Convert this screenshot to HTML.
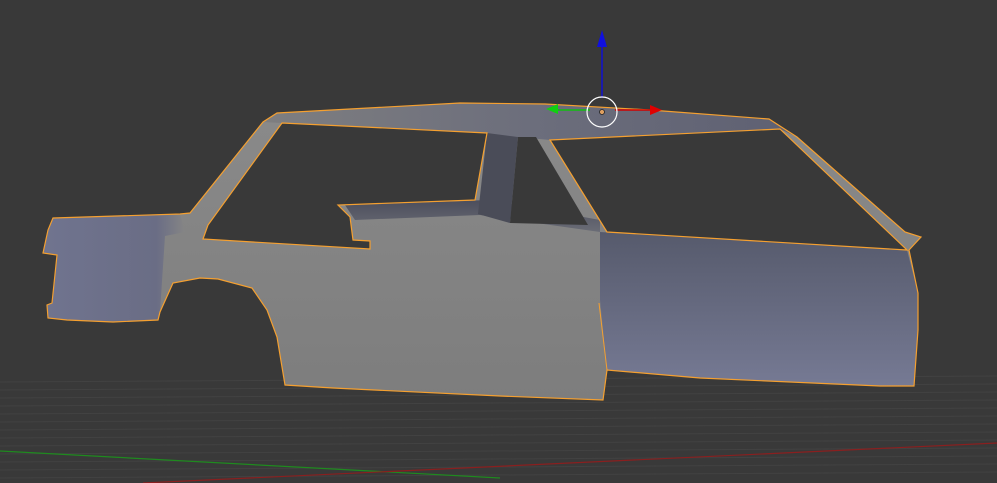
<!DOCTYPE html>
<html><head><meta charset="utf-8"><style>
html,body{margin:0;padding:0;background:#393939;overflow:hidden}
svg{display:block}
</style></head><body>
<svg width="997" height="483" viewBox="0 0 997 483" xmlns="http://www.w3.org/2000/svg">
<defs>
<linearGradient id="door" x1="0" y1="0" x2="0" y2="1">
<stop offset="0" stop-color="#8a8a8a"/><stop offset="1" stop-color="#7d7d7d"/></linearGradient>
<linearGradient id="rear" x1="0" y1="0" x2="0" y2="1">
<stop offset="0" stop-color="#565a6c"/><stop offset="1" stop-color="#767a94"/></linearGradient>
<linearGradient id="roof" x1="0" y1="0" x2="1" y2="0">
<stop offset="0" stop-color="#7e7e80"/><stop offset="0.5" stop-color="#6c6e7c"/><stop offset="1" stop-color="#5e6072"/></linearGradient>
<linearGradient id="fend" x1="0" y1="0" x2="1" y2="0">
<stop offset="0" stop-color="#70748f"/><stop offset="0.8" stop-color="#6a6d85"/><stop offset="1" stop-color="#858585"/></linearGradient>
<linearGradient id="seat" x1="0" y1="0" x2="0" y2="1">
<stop offset="0" stop-color="#4c4e5c"/><stop offset="1" stop-color="#6a6c76"/></linearGradient>
</defs>
<g stroke="#424242" stroke-width="1" fill="none">
<path d="M0 382 L997 376"/><path d="M0 390 L997 384"/><path d="M0 398 L997 392"/><path d="M0 406 L997 400"/>
<path d="M0 414 L997 408"/><path d="M0 422 L997 416"/><path d="M0 430 L997 424"/><path d="M0 438 L997 432"/>
<path d="M0 446 L997 440"/><path d="M0 454 L997 448"/><path d="M0 462 L997 456"/><path d="M0 470 L997 464"/><path d="M0 478 L997 472"/>
</g>
<path d="M0 451 L500 478" stroke="#1f8a1f" stroke-width="1.2"/>
<path d="M143 483 L997 443" stroke="#8a1f1f" stroke-width="1.2"/>
<!-- body -->
<path d="M53 218 L180 214 L190 213 L263 122 L277 113 L460 103 L545 104 L650 110 L769 119 L797 137 L905 232 L921 237 L909 250 L918 293 L918 330 L914 386 L880 386 L700 378 L607 370 L603 400 L500 396 L333 388 L285 385 L277 337 L267 310 L252 288 L218 279 L200 278 L173 283 L160 312 L158 320 L113 322 L67 320 L48 318 L47 305 L52 303 L57 255 L43 253 L48 230 Z" fill="url(#door)"/>
<path d="M53 218 L180 214 L185 232 L165 236 L160 312 L158 320 L113 322 L67 320 L48 318 L47 305 L52 303 L57 255 L43 253 L48 230 Z" fill="url(#fend)"/>
<path d="M600 232 L907 250 L918 293 L918 330 L914 386 L880 386 L700 378 L607 370 L600 300 Z" fill="url(#rear)"/>
<path d="M263 122 L277 113 L460 103 L545 104 L650 110 L769 119 L797 137 L780 129 L550 140 L518 137 L282 123 Z" fill="url(#roof)"/>
<path d="M345 205 L490 200 L600 220 L600 232 L480 215 L355 220 Z" fill="url(#seat)"/>
<path d="M487 133 L518 137 L510 223 L478 214 Z" fill="#4a4c58"/>
<!-- holes -->
<path d="M282 123 L487 133 L475 200 L338 205 L350 217 L353 240 L370 241 L370 249 L203 239 L208 225 Z" fill="#393939" stroke="#f5a030" stroke-width="1.2"/>
<path d="M550 140 L780 129 L907 250 L607 232 Z" fill="#393939" stroke="#f5a030" stroke-width="1.2"/>
<path d="M518 137 L536 137 L588 225 L510 223 Z" fill="#393939"/>
<path d="M53 218 L180 214 L190 213 L263 122 L277 113 L460 103 L545 104 L650 110 L769 119 L797 137 L905 232 L921 237 L909 250 L918 293 L918 330 L914 386 L880 386 L700 378 L607 370 L603 400 L500 396 L333 388 L285 385 L277 337 L267 310 L252 288 L218 279 L200 278 L173 283 L160 312 L158 320 L113 322 L67 320 L48 318 L47 305 L52 303 L57 255 L43 253 L48 230 Z" fill="none" stroke="#f5a030" stroke-width="1.2"/>
<path d="M599 303 L607 370" stroke="#f5a030" stroke-width="1"/>
<!-- gizmo -->
<line x1="602" y1="40" x2="602" y2="98" stroke="#1010d0" stroke-width="1.5"/>
<path d="M602 30 L597 47 L607 47 Z" fill="#1010e0"/>
<line x1="615" y1="110" x2="652" y2="110" stroke="#d00000" stroke-width="1.5"/>
<path d="M662 110 L650 105 L650 115 Z" fill="#e00000"/>
<line x1="556" y1="110" x2="590" y2="110" stroke="#10c010" stroke-width="1.5"/>
<path d="M546 109 L558 104 L558 114 Z" fill="#10d010"/>
<circle cx="602" cy="112" r="15" fill="none" stroke="#fff" stroke-width="1.2"/>
<circle cx="602" cy="112" r="2.5" fill="#e0a060" stroke="#222" stroke-width="0.8"/>
</svg>
</body></html>
